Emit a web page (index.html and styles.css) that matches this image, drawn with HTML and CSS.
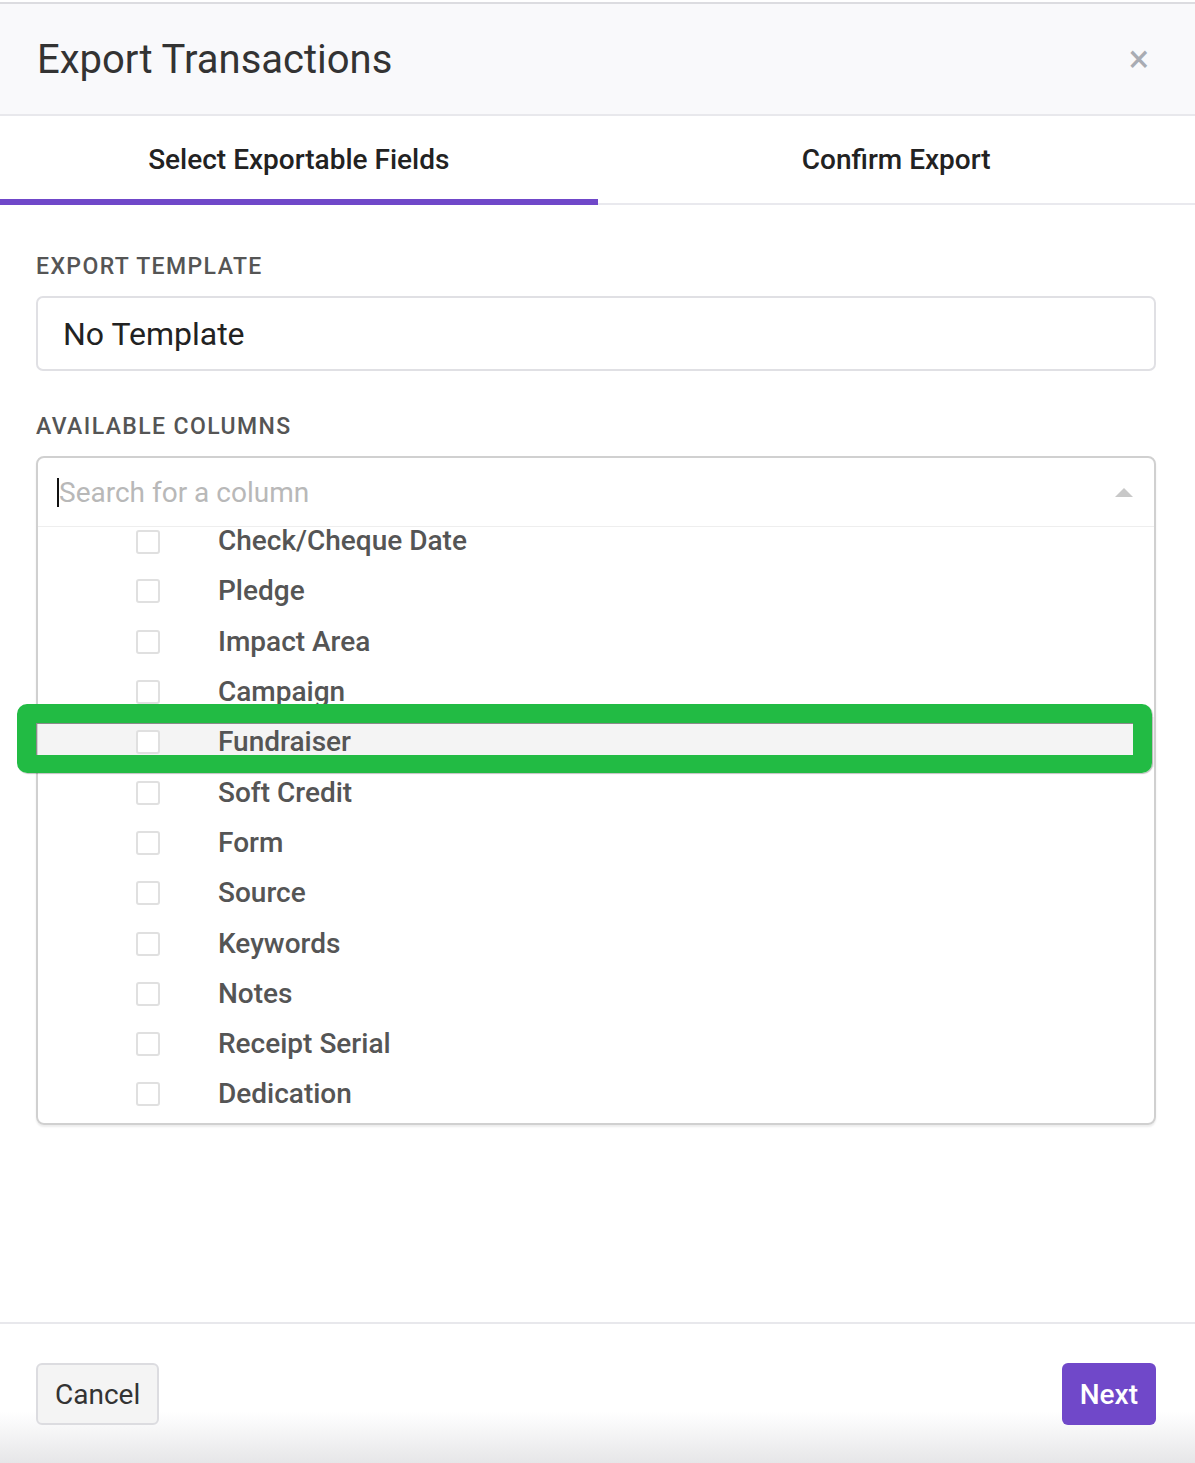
FILE: index.html
```html
<!DOCTYPE html>
<html lang="en">
<head>
  <meta charset="UTF-8">
  <title>Export Transactions</title>
  <link rel="stylesheet" href="styles.css">
</head>
<body>
  <div class="modal">
    <div class="modal-header">
      <h1>Export Transactions</h1>
      <span class="close">&times;</span>
    </div>

    <div class="tabs">
      <div class="tab active">Select Exportable Fields</div>
      <div class="tab">Confirm Export</div>
    </div>

    <div class="modal-body">
      <div class="label">Export Template</div>
      <div class="template-select">No Template</div>

      <div class="label">Available Columns</div>
      <div class="multiselect">
        <div class="search">
          <span class="caret"></span>
          <span class="placeholder">Search for a column</span>
          <span class="arrow-up"></span>
        </div>
        <div class="options" id="options"></div>
      </div>
    </div>

    <div class="modal-footer">
      <button class="btn btn-cancel">Cancel</button>
      <button class="btn btn-next">Next</button>
    </div>
  </div>

  <div class="highlight"></div>

  <script>
    const columns = [
      'Check/Cheque Date', 'Pledge', 'Impact Area', 'Campaign', 'Fundraiser',
      'Soft Credit', 'Form', 'Source', 'Keywords', 'Notes', 'Receipt Serial', 'Dedication'
    ];

    const list = document.getElementById('options');
    list.innerHTML = columns.map(name => `
      <div class="option${name === 'Fundraiser' ? ' hover' : ''}">
        <span class="checkbox"></span>
        <span class="option-name">${name}</span>
      </div>
    `).join('');
  </script>
</body>
</html>
```

FILE: styles.css
```css
body {
  margin: 0;
  font-family: Roboto, "Liberation Sans", sans-serif;
  background: #fff;
  color: #333;
  position: relative;
}

.modal {
  margin-top: 2px;
  border-top: 2px solid #dcdce0;
  min-height: 1459px;
  display: flex;
  flex-direction: column;
  background: linear-gradient(to bottom, #fff 0, #fff 1408px, #e6e6e8 1459px);
}

.modal-header {
  background-color: #f9f9fb;
  height: 110px;
  border-bottom: 2px solid #e8e8ec;
  display: flex;
  align-items: center;
  justify-content: space-between;
  padding: 0 46px 0 37px;
}

.modal-header h1 {
  margin: 0;
  font-size: 40px;
  font-weight: 400;
  color: #333;
}

.close {
  font-size: 38px;
  color: #a9acb3;
  line-height: 1;
}

.tabs {
  display: flex;
  height: 89px;
}

.tab {
  flex: 1;
  display: flex;
  align-items: center;
  justify-content: center;
  font-size: 28px;
  font-weight: 500;
  color: #222;
  border-bottom: 2px solid #e9e9ee;
}

.tab.active {
  border-bottom: 6px solid #7048c9;
  padding-top: 4px;
}

.modal-body {
  padding: 48px 39px 0 36px;
  flex: 1;
}

.label {
  font-size: 23px;
  font-weight: 500;
  letter-spacing: 1.4px;
  text-transform: uppercase;
  color: #555;
  margin-bottom: 16px;
}

.template-select {
  height: 71px;
  border: 2px solid #e0e0e4;
  border-radius: 7px;
  display: flex;
  align-items: center;
  padding-left: 25px;
  font-size: 32px;
  color: #222;
  margin-bottom: 42px;
}

.multiselect {
  border: 2px solid #d0d0d0;
  border-radius: 8px;
  box-shadow: 0 2px 2px rgba(0, 0, 0, 0.08);
  overflow: hidden;
}

.search {
  height: 68px;
  border-bottom: 1px solid #eee;
  display: flex;
  align-items: center;
  padding: 0 21px 0 19px;
}

.caret {
  width: 2px;
  height: 29px;
  background: #111;
}

.placeholder {
  flex: 1;
  font-size: 28px;
  color: #b8b8b8;
}

.arrow-up {
  width: 0;
  height: 0;
  border-left: 9px solid transparent;
  border-right: 9px solid transparent;
  border-bottom: 9px solid #c8c8c8;
}

.options {
  height: 596px;
  overflow: hidden;
}

.option {
  height: 50.3px;
  display: flex;
  align-items: center;
  padding-left: 98px;
}

/* list is scrolled a little, the first row shows only its lower part */
.option:first-child {
  height: 39.3px;
  box-sizing: border-box;
  padding-top: 3px;
  align-items: flex-start;
}

.option.hover {
  background-color: #f4f4f4;
}

.checkbox {
  width: 20px;
  height: 20px;
  border: 2px solid #e0e0e0;
  border-radius: 3px;
  background: #fff;
  margin-right: 58px;
}

.option-name {
  font-size: 28px;
  line-height: 22px;
  font-weight: 500;
  color: #555;
}

.modal-footer {
  border-top: 2px solid #e8e8ec;
  height: 137px;
  display: flex;
  justify-content: space-between;
  align-items: flex-start;
  padding: 39px 39px 0 36px;
  margin-top: 197px;
}

.btn {
  font-family: inherit;
  font-size: 28px;
  height: 62px;
  border-radius: 6px;
  cursor: pointer;
}

.btn-cancel {
  background-color: #f4f4f4;
  border: 2px solid #dcdce0;
  color: #333;
  padding: 0 17px;
}

.btn-next {
  background-color: #7048c9;
  border: none;
  color: #fff;
  font-weight: 500;
  padding: 0 18px;
}

/* green marker around the hovered row */
.highlight {
  position: absolute;
  left: 17px;
  top: 704px;
  width: 1097px;
  height: 32px;
  border: 19px solid #22bb44;
  border-bottom-width: 18px;
  border-radius: 10px;
  box-shadow: inset 1px 1px 0 #8a8a8a, 1px 1px 1px rgba(0, 0, 0, 0.25);
}
```
